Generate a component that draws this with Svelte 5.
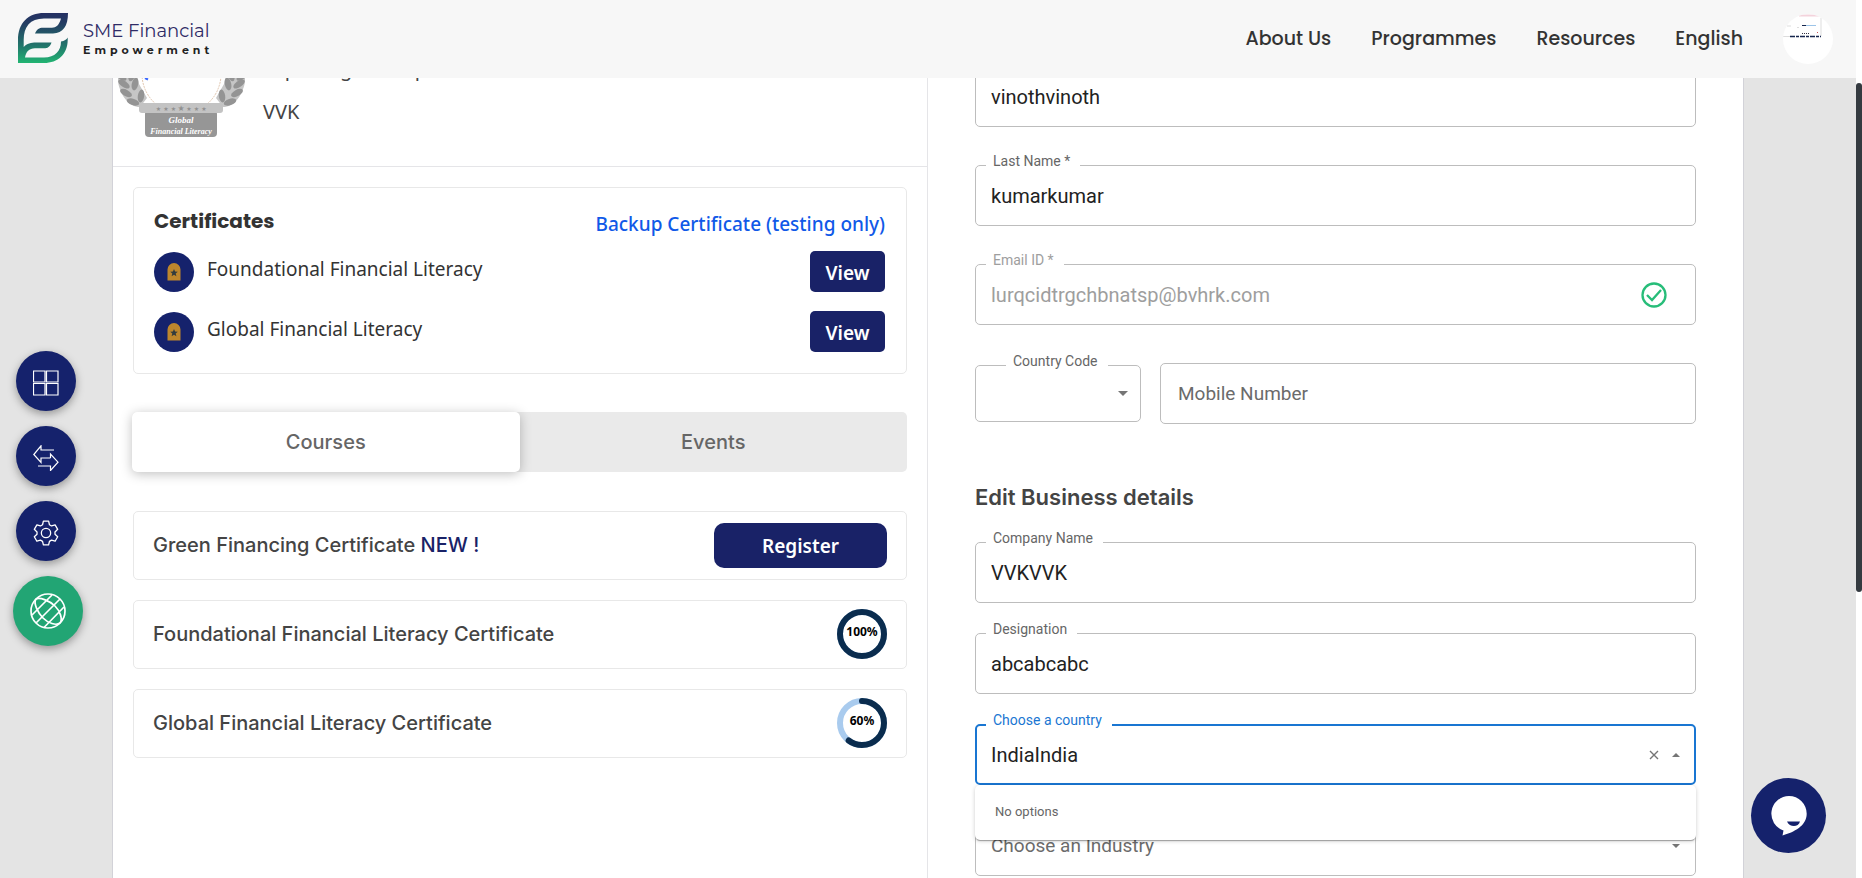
<script>
  const nav = ['About Us', 'Programmes', 'Resources', 'English'];
  const certificates = ['Foundational Financial Literacy', 'Global Financial Literacy'];
  const courses = [
    { name: 'Foundational Financial Literacy Certificate', percent: 100 },
    { name: 'Global Financial Literacy Certificate', percent: 60 }
  ];
  const ring = 2 * Math.PI * 22;
  // Laurel leaves of one side: x, y, rotation
  const leaves = [
    [121, 76, -50], [124, 84, -55], [126, 93, -62], [133, 102, -72],
    [132, 75, 18], [135, 84, 12], [141, 96, 8]
  ];

  let firstName = $state('vinothvinoth');
  let lastName = $state('kumarkumar');
  let email = $state('lurqcidtrgchbnatsp@bvhrk.com');
  let mobile = $state('');
  let company = $state('VVKVVK');
  let designation = $state('abcabcabc');
  let country = $state('IndiaIndia');
  let industry = $state('');
  let tab = $state('Courses');
</script>

<div class="page">
  <header>
    <a class="brand" href="#home" aria-label="SME Financial Empowerment">
      <svg class="logo" viewBox="0 0 50 50">
        <defs>
          <linearGradient id="leaf" gradientUnits="userSpaceOnUse" x1="0" y1="0" x2="0" y2="50">
            <stop offset="0" stop-color="#242f62" />
            <stop offset="0.2" stop-color="#243d63" />
            <stop offset="0.65" stop-color="#22756b" />
            <stop offset="1" stop-color="#22b573" />
          </linearGradient>
        </defs>
        <path d="M17 20.4C19 16.5 21 14.8 25 14.8H34C38 14.8 41 12.5 43 5.6H26C12 5.6 5.7 14 5.7 27V34C9 30.5 13 29.5 18 29.5H33.5C32 34 29.500 35.300 26 35.300H17C11 35.300 8 39 7 44.500H26C37 44.500 43 38 43 28.500C46.500 28 48.500 26.500 49.700 24.500V27C49.700 41 40 50 26 50H0V27C0 10 10 0 26 0H50C50 13 45 20.400 35 20.400Z" fill="url(#leaf)" />
      </svg>
      <span class="brand-text"><span class="brand-top">SME Financial</span><span class="brand-bottom">Empowerment</span></span>
    </a>
    <nav>
      {#each nav as item}<a href="#{item}">{item}</a>{/each}
      <button class="avatar" aria-label="Account">
        <svg viewBox="0 0 50 50">
          <path d="M16 1.500h20" stroke="#f3d3dc" stroke-width="2" />
          <path d="M4 12h4M14 13.500h2" stroke="#ddd" />
          <path d="M19 11.500h4" stroke="#17264d" />
          <path d="M23 11.500h10" stroke="#9cc4e8" />
          <path d="M0 22.500h7M38 4v18" stroke="#ddd" />
          <path d="M19 19.500h7" stroke="#334" stroke-dasharray="1 1" />
          <path d="M34 18.500h1" stroke="#c55" />
          <path d="M7 22.500h31" stroke="#17264d" stroke-width="1.500" stroke-dasharray="5 1 3 1" />
        </svg>
      </button>
    </nav>
  </header>

  <div class="body">
    <main>
      <section class="left">
        <div class="profile">
          <svg class="badge" viewBox="118 78 127 59">
            <path d="M142 74a39.500 39.500 0 0 0 79 0" fill="none" stroke="#e0c4ac" stroke-dasharray="2 1" />
            <path d="M145 78l3 1.500" stroke="#3866ff" stroke-width="2" />
            {#each [0, 1] as side}
              <g transform={side ? 'translate(363 0) scale(-1 1)' : ''}>
                <path d="M117 74C118 92 127 107 140 107L147 98L139 84L136 74Z" fill="#c6c6c6" />
                {#each leaves as [x, y, turn]}
                  <ellipse cx={x} cy={y} rx="3.200" ry="6.500" transform="rotate({turn} {x} {y})" fill="#949494" />
                {/each}
              </g>
            {/each}
            <rect x="145" y="110" width="72" height="27" rx="4" fill="#969696" />
            <rect x="139" y="103" width="84" height="10" rx="3" fill="#c3c3c3" />
            <g fill="#919191" font-family="DejaVu Sans" text-anchor="middle">
              {#each [158.5, 166, 173.5, 181, 189, 196.5, 204] as x}
                <text {x} y="110.500" font-size={x === 181 ? 8 : 6}>★</text>
              {/each}
            </g>
            <g fill="#fff" font-family="Liberation Serif, serif" font-style="italic" font-size="9" font-weight="700" text-anchor="middle">
              <text x="181" y="123">Global</text>
              <text x="181" y="134" font-size="8">Financial Literacy</text>
            </g>
          </svg>
          <div class="who">
            <span>Exploring Startup</span>
            <span>VVK</span>
          </div>
        </div>

        <div class="stack">
          <section class="card certs">
            <div class="certs-head">
              <h2>Certificates</h2>
              <a href="#backup">Backup Certificate (testing only)</a>
            </div>
            {#each certificates as name}
              <div class="cert">
                <svg class="medal" viewBox="0 0 40 40">
                  <circle cx="20" cy="20" r="20" fill="#15226c" />
                  <path d="M13.500 28.500V17.500a6.500 6.500 0 0 1 13 0V28.500Z" fill="#be862c" />
                  <path d="M20 17l1.100 2.600 2.700.2-2.100 1.800.7 2.700-2.400-1.500-2.400 1.500.7-2.700-2.100-1.800 2.700-.2Z" fill="#333c3d" />
                </svg>
                <span>{name}</span>
                <button class="view">View</button>
              </div>
            {/each}
          </section>

          <div class="tabs" role="tablist">
            {#each ['Courses', 'Events'] as name}
              <button role="tab" class:active={tab === name} aria-selected={tab === name} onclick={() => (tab = name)}>{name}</button>
            {/each}
          </div>

          <div class="courses">
            <article class="card course">
              <h3>Green Financing Certificate <b>NEW !</b></h3>
              <button class="register">Register</button>
            </article>
            {#each courses as course}
              <article class="card course">
                <h3>{course.name}</h3>
                <svg class="ring" viewBox="0 0 50 50" role="img" aria-label="{course.percent}%">
                  <circle cx="25" cy="25" r="22" fill="none" stroke="#a9cbee" stroke-width="6" />
                  <circle cx="25" cy="25" r="22" fill="none" stroke="#0a2c4e" stroke-width="6" stroke-linecap="round"
                    stroke-dasharray="{(ring * course.percent) / 100} {ring}" transform="rotate(-90 25 25)" />
                  <text x="25" y="27" text-anchor="middle" font-family="Noto Sans, sans-serif" font-size="12" font-weight="700">{course.percent}%</text>
                </svg>
              </article>
            {/each}
          </div>
        </div>
      </section>

      <form class="right">
        <div class="group personal">
          <div class="field">
            <label for="first">First Name *</label>
            <input id="first" bind:value={firstName} />
          </div>
          <div class="field">
            <label for="last">Last Name *</label>
            <input id="last" bind:value={lastName} />
          </div>
          <div class="field disabled">
            <label for="email">Email ID *</label>
            <input id="email" bind:value={email} disabled />
            <svg class="tick" viewBox="0 0 26 26" fill="none" stroke="#27bd79" stroke-width="2.300">
              <circle cx="13" cy="13" r="11.500" />
              <path d="M6 13l5 5 9-10" />
            </svg>
          </div>
          <div class="phone">
            <div class="field code">
              <label for="code">Country Code</label>
              <select id="code"><option value=""></option><option>+91</option></select>
              <svg class="arrow" viewBox="0 0 10 5"><path d="M0 0h10L5 5Z" /></svg>
            </div>
            <div class="field number">
              <input id="mobile" aria-label="Mobile Number" placeholder="Mobile Number" bind:value={mobile} />
            </div>
          </div>
        </div>

        <h2>Edit Business details</h2>

        <div class="group business">
          <div class="field">
            <label for="company">Company Name</label>
            <input id="company" bind:value={company} />
          </div>
          <div class="field">
            <label for="designation">Designation</label>
            <input id="designation" bind:value={designation} />
          </div>
          <div class="field focused">
            <label for="country">Choose a country</label>
            <input id="country" role="combobox" aria-expanded="true" aria-controls="country-list" bind:value={country} />
            <button type="button" class="icon" aria-label="Clear" onclick={() => (country = '')}>
              <svg viewBox="0 0 10 10" width="10" height="10"><path d="M1 1l8 8M9 1L1 9" stroke="#757575" stroke-width="1.400" /></svg>
            </button>
            <button type="button" class="icon" aria-label="Close">
              <svg viewBox="0 0 8 4" width="8" height="4"><path d="M0 4h8L4 0Z" fill="#757575" /></svg>
            </button>
            <div class="popup" id="country-list">No options</div>
          </div>
          <div class="field">
            <input id="industry" role="combobox" aria-expanded="false" aria-controls="industry-list" aria-label="Choose an Industry" placeholder="Choose an Industry" bind:value={industry} />
            <button type="button" class="icon" aria-label="Open">
              <svg viewBox="0 0 8 4" width="8" height="4"><path d="M0 0h8L4 4Z" fill="#757575" /></svg>
            </button>
          </div>
        </div>
      </form>
    </main>
  </div>

  <aside>
    <button aria-label="Dashboard">
      <svg viewBox="0 0 26 26"><path d="M.5 1h11.500v11H.5ZM13.500 1H25v11H13.500ZM.5 13.500h11.500v11.500H.5ZM13.500 13.500H25v11.500H13.500Z" /></svg>
    </button>
    <button aria-label="Switch">
      <svg viewBox="0 0 26 26"><path d="M21 5H8V.8L.8 9.500 8 17.500V13h9.500M5 21h12.500v4.500l7.500-8.300-7.500-8.200V13" /></svg>
    </button>
    <button aria-label="Settings">
      <svg viewBox="0 0 24 24">
        <path d="M9.600 1h4.800l.8 3.400 1.900 1.100 3.300-1 2.400 4.100L20.300 11v2.200l2.500 2.300-2.400 4.100-3.300-1-1.900 1.100-.8 3.300H9.600l-.8-3.300-1.900-1.100-3.300 1-2.400-4.100 2.500-2.300V11L1.200 8.600l2.400-4.100 3.300 1 1.900-1.100Z" stroke-linejoin="round" />
        <circle cx="12" cy="12" r="4.300" />
      </svg>
    </button>
    <button class="globe" aria-label="Language">
      <svg viewBox="0 0 36 36">
        <circle cx="18" cy="18" r="17" />
        <path d="M6 6C10 4 20 8 25 13S33 26 30 30M6 6C3 10 8 20 13 25S26 33 30 30M2 22L22 2M6 30L30 6M14 34.500L34 14" />
      </svg>
    </button>
  </aside>

  <button class="chat" aria-label="Open chat">
    <svg viewBox="0 0 36 40">
      <path d="M18 0a17.700 17.700 0 0 1 17.700 17.700C35.700 30 23 36 11.500 39.500L12.500 34.500A17.700 17.700 0 0 1 18 0Z" fill="#fff" />
      <path d="M16 25.500h13c-1.500 6-10.500 6-13 0Z" fill="#15226c" />
    </svg>
  </button>
  <div class="scroll"></div>
</div>

<style>
  :global(body) { margin: 0; background: #fff; }
  .page {
    height: 100vh; overflow: hidden; position: relative; box-sizing: border-box; padding-right: 6px;
    display: flex; flex-direction: column; font-family: 'Noto Sans', sans-serif; color: #333;
  }
  .page :global(*) { box-sizing: border-box; }
  button { font: inherit; border: 0; padding: 0; cursor: pointer; }
  a { text-decoration: none; }
  h2, h3 { margin: 0; }

  header {
    flex: none; height: 78px; padding: 0 23px 0 18px; background: #f7f7f7;
    display: flex; align-items: center; justify-content: space-between;
  }
  .brand { display: flex; align-items: center; gap: 15px; padding-bottom: 2px; }
  .logo { width: 50px; height: 50px; }
  .brand-text { display: flex; flex-direction: column; gap: 4px; }
  .brand-top { font: 400 18px/19px Montserrat, Inter, sans-serif; color: #2f2b66; }
  .brand-bottom { font: 700 11px/10px Montserrat, Inter, sans-serif; letter-spacing: 4px; color: #222; }
  nav { display: flex; align-items: center; gap: 40px; }
  nav a { font: 500 19px/28px Poppins, Inter, sans-serif; color: #333; }
  .avatar { width: 50px; height: 50px; border-radius: 50%; background: #fff; overflow: hidden; }

  .body { flex: 1; min-height: 0; overflow: hidden; padding: 0 112px; background: #e4e4e4; }
  main {
    height: 100%; display: grid; grid-template-columns: 1fr 1fr; background: #fff;
    border: solid #d2d2d8; border-width: 0 1px;
  }
  .left { border-right: 1px solid #e5e5e8; min-width: 0; }
  .profile { height: 89px; padding-left: 5px; display: flex; gap: 18px; border-bottom: 1px solid #e5e5e8; }
  .badge { width: 127px; height: 59px; }
  .who { display: flex; flex-direction: column; gap: 15px; margin-top: -23px; font-size: 20px; line-height: 28px; color: #444; font-weight: 400; }
  .stack { padding: 20px 20px 0 20px; }
  .card { border: 1px solid #e8e8e8; border-radius: 5px; background: #fff; }
  .certs { height: 187px; padding: 18px 21px 0 20px; font-size: 19px; line-height: 28px; }
  .certs-head { display: flex; justify-content: space-between; height: 45px; }
  .certs-head h2 { font: 700 20px/30px Poppins, Inter, sans-serif; }
  .certs-head a { color: #1059e8; padding-top: 4px; font-weight: 500; }
  .cert { display: flex; align-items: flex-start; gap: 13px; height: 60px; }
  .cert span { flex: 1; padding-top: 4px; }
  .medal { width: 40px; height: 40px; margin-top: 1px; }
  .view { width: 75px; height: 41px; border-radius: 5px; background: #192267; color: #fff; font-weight: 600; padding-top: 3px; }

  .tabs { display: flex; height: 60px; margin: 38px 0 39px -1px; background: #eaeaea; border-radius: 5px; }
  .tabs button { flex: 1; background: transparent; border-radius: 5px; font: 500 20px/24px Inter, sans-serif; color: #666; }
  .tabs .active { background: #fff; box-shadow: 0 2px 12px rgba(0, 0, 0, .25); }
  .courses { display: grid; gap: 20px; }
  .course { height: 69px; padding: 0 19px; display: flex; align-items: center; justify-content: space-between; }
  .course h3 { font: 500 20px/26px Inter, sans-serif; color: #444; padding-bottom: 2px; }
  .course b { font-weight: 500; color: #192267; }
  .register { width: 173px; height: 45px; border-radius: 10px; background: #192267; color: #fff; font-size: 19px; font-weight: 600; }
  .ring { width: 50px; height: 50px; margin-bottom: 2px; }

  .right { padding: 0 47px; margin-top: -12px; font-family: Roboto, sans-serif; min-width: 0; }
  .right h2 { font: 600 22px/30px Inter, sans-serif; color: #444; margin: 58px 0 30px; }
  .group { display: grid; }
  .personal { gap: 38px; }
  .business { gap: 30px; }
  .field {
    position: relative; height: 61px; display: flex; align-items: center;
    border: 1px solid #bdbdbd; border-radius: 5px; padding: 0 15px; color: #222;
  }
  .field input, .field select {
    flex: 1; min-width: 0; height: 100%; border: 0; outline: 0; padding: 0; background: transparent;
    font: 400 20px/28px Roboto, sans-serif; color: inherit;
  }
  .field input:placeholder-shown { font-size: 19px; }
  .field input::placeholder { color: #6b6b6b; opacity: 1; }
  .field label {
    position: absolute; left: 10px; top: -14px; padding: 0 10px 0 7px; background: #fff;
    font-size: 14px; line-height: 18px; color: #666; white-space: nowrap;
  }
  .disabled input, .disabled label { color: #9e9e9e; }
  .tick { width: 26px; height: 26px; margin-right: 13px; }
  .phone { display: flex; gap: 19px; align-items: center; }
  .code { width: 166px; height: 57px; }
  .code label { left: 30px; }
  .code select { appearance: none; }
  .arrow { position: absolute; right: 12px; width: 10px; height: 5px; fill: #757575; pointer-events: none; }
  .number { flex: 1; padding-left: 17px; }
  .focused { border: 2px solid #1976d2; padding: 0 14px; z-index: 2; }
  .focused label { color: #1976d2; left: 9px; top: -15px; }
  .icon { width: 22px; height: 28px; background: transparent; display: grid; place-items: center; }
  .icon:last-of-type { margin-right: -7px; }
  .popup {
    position: absolute; left: -2px; right: -2px; top: calc(100% + 2px); height: 55px; background: #fff; border-radius: 5px;
    padding: 12px 20px; font-size: 13px; line-height: 30px; color: #666;
    box-shadow: 0 2px 1px -1px rgba(0, 0, 0, .3), 0 1px 4px rgba(0, 0, 0, .2);
  }

  aside { position: absolute; left: 13px; top: 351px; display: flex; flex-direction: column; gap: 15px; }
  aside button {
    width: 60px; height: 60px; margin-left: 3px; border-radius: 50%; background: #15226c;
    display: grid; place-items: center; box-shadow: 0 3px 8px rgba(0, 0, 0, .35); padding-top: 4px;
  }
  aside svg { width: 26px; height: 26px; fill: none; stroke: #fff; stroke-width: 1.200; }
  aside .globe { width: 70px; height: 70px; margin-left: 0; background: #22a574; padding-top: 0; }
  .globe svg { width: 36px; height: 36px; stroke-width: 1.700; }
  .chat {
    position: absolute; right: 36px; bottom: 25px; width: 75px; height: 75px; border-radius: 50%;
    background: #15226c; display: grid; place-items: center;
  }
  .chat svg { width: 36px; height: 40px; }
  .scroll { position: absolute; right: 0; top: 83px; width: 6px; height: 58vh; border-radius: 3px; background: #343a40; }
</style>
